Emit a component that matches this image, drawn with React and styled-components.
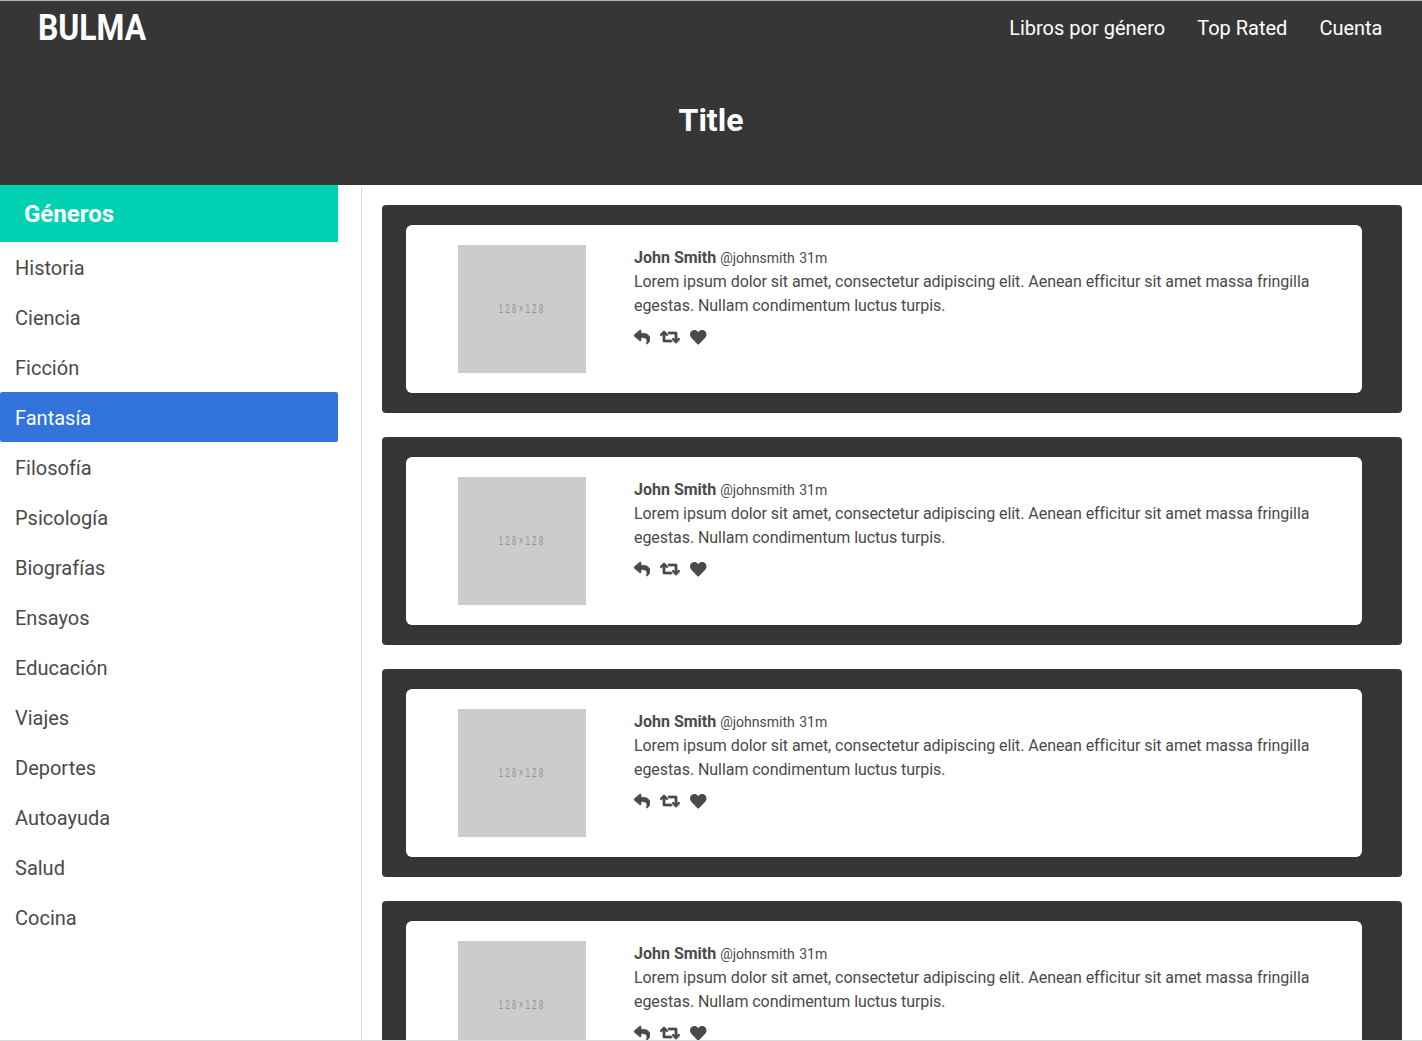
import React from "react";
import styled, { createGlobalStyle } from "styled-components";
import { FaReply, FaRetweet, FaHeart } from "react-icons/fa";

const Global = createGlobalStyle`
  html, body { margin: 0; padding: 0; background: #fff; }
  * { box-sizing: border-box; }
  body { font-family: Roboto, "Liberation Sans", sans-serif; font-size: 16px; line-height: 24px; color: #4a4a4a; }
`;

const Frame = styled.div`
  height: 1041px;
  overflow: hidden;
  display: flex;
  flex-direction: column;
  border-top: 1px solid #b5b5b5;
  border-bottom: 1px solid #dbdbdb;
`;
const Hero = styled.header`
  background: #363636;
  height: 184px;
  flex: none;
  color: #fff;
`;
const Navbar = styled.nav`
  height: 54px;
  display: flex;
  align-items: center;
  justify-content: space-between;
  padding: 0 39.5px 0 38px;
`;
const Logo = styled.div`
  font-family: Roboto, sans-serif;
  font-weight: 700;
  font-size: 37px;
  line-height: 54px;
  color: #fff;
  transform-origin: left center;
  transform: scaleX(0.86);
`;
const NavLinks = styled.div`
  display: flex;
  gap: 32px;
`;
const NavLink = styled.a`
  font-size: 20px;
  line-height: 54px;
  color: #fff;
`;
const Title = styled.h1`
  margin: 0;
  padding-top: 45px;
  font-size: 32px;
  line-height: 40px;
  font-weight: 700;
  text-align: center;
  color: #fff;
`;
const Body = styled.div`
  flex: 1;
  min-height: 0;
  display: flex;
`;
const Sidebar = styled.aside`
  width: 362px;
  flex: none;
  padding-right: 23px;
  border-right: 1px solid #dbdbdb;
  border-top-right-radius: 4px;
`;
const MenuHead = styled.div`
  height: 57px;
  background: #00d1b2;
  color: #fff;
  font-size: 24px;
  font-weight: 700;
  line-height: 59px;
  padding-left: 24px;
`;
const MenuList = styled.ul`
  list-style: none;
  margin: 0;
  padding: 0;
`;
const MenuItem = styled.li`
  height: 50px;
  line-height: 52px;
  padding-left: 15px;
  font-size: 20px;
  border-radius: 2px;
  background: ${(p) => (p.$active ? "#3273dc" : "transparent")};
  color: ${(p) => (p.$active ? "#fff" : "#4a4a4a")};
`;
const Main = styled.main`
  flex: 1;
  min-width: 0;
  padding: 20px 20px 0;
  display: flex;
  flex-direction: column;
  gap: 24px;
`;
const Box = styled.section`
  flex: none;
  background: #363636;
  border-radius: 4px;
  padding: 20px 40px 20px 24px;
`;
const Card = styled.article`
  background: #fff;
  border-radius: 6px;
  height: 168px;
  padding: 20px 40px 20px 52px;
  display: flex;
  gap: 48px;
`;
const Placeholder = styled.div`
  width: 128px;
  height: 128px;
  flex: none;
  background: #ccc;
  color: #8f8f8f;
  display: flex;
  align-items: center;
  justify-content: center;
  font-family: "Liberation Sans", sans-serif;
`;
const PlaceholderLabel = styled.span`
  font-size: 12.5px;
  line-height: 14px;
  letter-spacing: 4.2px;
  transform: scaleX(0.6);
  white-space: nowrap;
`;
const Content = styled.div`
  flex: 1;
  min-width: 0;
  padding-top: 1px;
  display: flex;
  flex-direction: column;
`;
const Text = styled.p`
  margin: 0;
`;
const Lorem = styled.span`
  letter-spacing: -0.065px;
`;
const Name = styled.strong`
  font-weight: 700;
  color: #4a4a4a;
`;
const Small = styled.small`
  font-size: 14px;
  word-spacing: 1px;
`;
const Actions = styled.div`
  display: flex;
  align-items: center;
  gap: 10px;
  margin-top: 7px;
  height: 24px;
  color: #4a4a4a;
`;
const ReplyIcon = styled(FaReply)`
  width: 16px;
  height: 16px;
  flex: none;
  stroke: currentColor;
  stroke-width: 24;
`;
const RetweetIcon = styled(FaRetweet)`
  width: 20px;
  height: 16px;
  flex: none;
  stroke: currentColor;
  stroke-width: 24;
`;
const HeartIcon = styled(FaHeart)`
  width: 16.5px;
  height: 16.5px;
  flex: none;
`;

const genres = ["Historia","Ciencia","Ficción","Fantasía","Filosofía","Psicología","Biografías","Ensayos","Educación","Viajes","Deportes","Autoayuda","Salud","Cocina"];

function Post() {
  return (
    <Box>
      <Card>
        <Placeholder><PlaceholderLabel>128×128</PlaceholderLabel></Placeholder>
        <Content>
          <Text>
            <Name>John Smith</Name> <Small>@johnsmith 31m</Small>
            <br />
            <Lorem>Lorem ipsum dolor sit amet, consectetur adipiscing elit. Aenean efficitur sit amet massa fringilla egestas. Nullam condimentum luctus turpis.</Lorem>
          </Text>
          <Actions>
            <ReplyIcon />
            <RetweetIcon />
            <HeartIcon />
          </Actions>
        </Content>
      </Card>
    </Box>
  );
}

export default function App() {
  return (
    <>
      <Global />
      <Frame>
        <Hero>
          <Navbar>
            <Logo>BULMA</Logo>
            <NavLinks>
              <NavLink>Libros por género</NavLink>
              <NavLink>Top Rated</NavLink>
              <NavLink>Cuenta</NavLink>
            </NavLinks>
          </Navbar>
          <Title>Title</Title>
        </Hero>
        <Body>
          <Sidebar>
            <MenuHead>Géneros</MenuHead>
            <MenuList>
              {genres.map((g) => (
                <MenuItem key={g} $active={g === "Fantasía"}>{g}</MenuItem>
              ))}
            </MenuList>
          </Sidebar>
          <Main>
            <Post /><Post /><Post /><Post />
          </Main>
        </Body>
      </Frame>
    </>
  );
}
